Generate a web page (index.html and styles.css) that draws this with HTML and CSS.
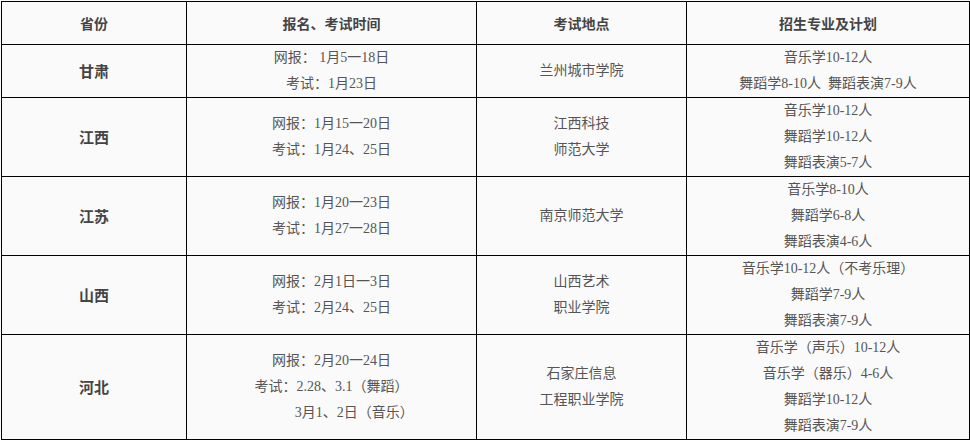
FILE: index.html
```html
<!DOCTYPE html>
<html lang="zh-CN">
<head>
<meta charset="utf-8">
<title>招生计划</title>
<link rel="stylesheet" href="styles.css">
</head>
<body>
<div class="wrap">
<table class="plan">
  <colgroup>
    <col class="c1"><col class="c2"><col class="c3"><col class="c4">
  </colgroup>
  <thead>
    <tr><th>省份</th><th>报名、考试时间</th><th>考试地点</th><th>招生专业及计划</th></tr>
  </thead>
  <tbody>
    <tr>
      <td class="prov">甘肃</td>
      <td>网报： 1月5一18日<br>考试：1月23日</td>
      <td>兰州城市学院</td>
      <td>音乐学10-12人<br>舞蹈学8-10人&nbsp;&nbsp;舞蹈表演7-9人</td>
    </tr>
    <tr>
      <td class="prov">江西</td>
      <td>网报：1月15一20日<br>考试：1月24、25日</td>
      <td>江西科技<br>师范大学</td>
      <td>音乐学10-12人<br>舞蹈学10-12人<br>舞蹈表演5-7人</td>
    </tr>
    <tr>
      <td class="prov">江苏</td>
      <td>网报：1月20一23日<br>考试：1月27一28日</td>
      <td>南京师范大学</td>
      <td>音乐学8-10人<br>舞蹈学6-8人<br>舞蹈表演4-6人</td>
    </tr>
    <tr>
      <td class="prov">山西</td>
      <td>网报：2月1日一3日<br>考试：2月24、25日</td>
      <td>山西艺术<br>职业学院</td>
      <td>音乐学10-12人（不考乐理）<br>舞蹈学7-9人<br>舞蹈表演7-9人</td>
    </tr>
    <tr>
      <td class="prov">河北</td>
      <td>网报：2月20一24日<br>考试：2.28、3.1（舞蹈）<br>&nbsp;&nbsp;&nbsp;&nbsp;&nbsp;&nbsp;&nbsp;&nbsp;&nbsp;&nbsp;&nbsp;&nbsp;&nbsp;3月1、2日（音乐）</td>
      <td>石家庄信息<br>工程职业学院</td>
      <td>音乐学（声乐）10-12人<br>音乐学（器乐）4-6人<br>舞蹈学10-12人<br>舞蹈表演7-9人</td>
    </tr>
  </tbody>
</table>
</div>
</body>
</html>
```
FILE: styles.css
```css
html, body {
  margin: 0;
  padding: 0;
  background: #fafafa;
}
.wrap {
  padding: 1px 0 0 1px;
}
.plan {
  border-collapse: collapse;
  table-layout: fixed;
  width: 968px;
  font-family: "Liberation Serif", "Noto Sans CJK SC", serif;
  font-size: 14px;
  color: #555;
  background: #fafafa;
}
.c1 { width: 185px; }
.c2 { width: 290px; }
.c3 { width: 210px; }
.c4 { width: 283px; }
.plan th,
.plan td {
  border: 1px solid #000;
  padding: 0;
  text-align: center;
  vertical-align: middle;
  line-height: 26px;
}
.plan th {
  height: 42px;
  font-family: "Noto Sans CJK SC", sans-serif;
  font-weight: bold;
  color: #444;
}
.plan td.prov {
  font-family: "Noto Sans CJK SC", sans-serif;
  font-weight: bold;
  font-size: 15px;
  color: #444;
}
```
